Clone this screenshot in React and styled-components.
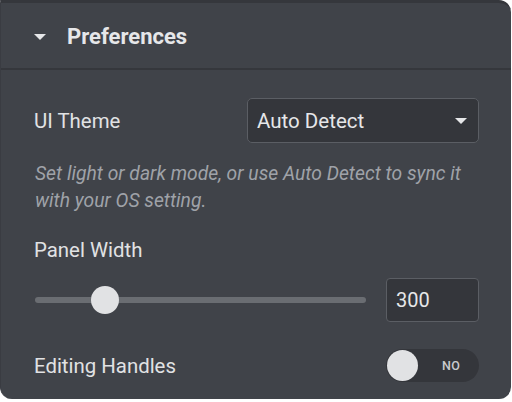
import React from "react";
import styled, { createGlobalStyle } from "styled-components";

const Global = createGlobalStyle`
  html, body { margin: 0; padding: 0; background: #ffffff; }
  body { font-family: Roboto, "Noto Sans", Arial, sans-serif; }
`;

const Panel = styled.div`
  width: 511px;
  height: 399px;
  box-sizing: border-box;
  background: #404349;
  border-top: 3px solid #35373c;
  border-left: 1px solid #3a3c42;
  border-radius: 0 12px 12px 12px;
  color: #e1e2e4;
  overflow: hidden;
`;

const Header = styled.div`
  height: 67px;
  border-bottom: 2px solid #35373c;
  display: flex;
  align-items: center;
  padding-left: 33px;
  gap: 21px;
  font-weight: 700;
  font-size: 22px;
  color: #e6e7e9;
  padding-top: 2px;
  box-sizing: border-box;
`;

const Caret = styled.span`
  width: 0;
  height: 0;
  border-left: 6px solid transparent;
  border-right: 6px solid transparent;
  border-top: 6px solid ${(p) => p.color || "#e6e7e9"};
`;

const Body = styled.div`
  padding: 28px 32px 0 33px;
  display: flex;
  flex-direction: column;
`;

const Row = styled.div`
  display: flex;
  align-items: center;
  justify-content: space-between;
  gap: 20px;
  margin-top: ${(p) => p.mt || 0}px;
`;

const Label = styled.div`
  font-size: 20.4px;
  line-height: 24px;
  color: #e1e2e4;
`;

const Select = styled.div`
  width: 232px;
  height: 45px;
  box-sizing: border-box;
  border: 1px solid #5b5e64;
  border-radius: 5px;
  background: #34363b;
  display: flex;
  align-items: center;
  justify-content: space-between;
  padding: 0 11px 0 9px;
  font-size: 20.5px;
  color: #e6e7e9;
`;

const Help = styled.div`
  margin-top: 17px;
  font-style: italic;
  font-size: 19.3px;
  line-height: 27px;
  color: #9fa2a8;
  padding-left: 1px;
`;

const Track = styled.div`
  position: relative;
  flex: 1;
  height: 6px;
  border-radius: 3px;
  background: #6a6d72;
  margin-left: 1px;
`;

const Thumb = styled.div`
  position: absolute;
  top: 50%;
  width: 28px;
  height: 28px;
  border-radius: 50%;
  background: #e1e2e4;
  transform: translate(-50%, -50%);
`;

const NumberBox = styled.div`
  width: 93px;
  height: 44px;
  box-sizing: border-box;
  border: 1px solid #5b5e64;
  border-radius: 4px;
  background: #34363b;
  display: flex;
  align-items: center;
  padding-left: 9px;
  font-size: 20px;
  color: #e6e7e9;
`;

const Toggle = styled.div`
  position: relative;
  width: 93px;
  height: 33px;
  box-sizing: border-box;
  border-radius: 17px;
  background: #34363b;
  display: flex;
  align-items: center;
  justify-content: flex-end;
  padding-right: 19px;
  font-size: 12.5px;
  font-weight: 500;
  color: #c9cbce;
  letter-spacing: 0.2px;
`;

const Knob = styled.div`
  position: absolute;
  left: 1px;
  top: 1px;
  width: 31px;
  height: 31px;
  border-radius: 50%;
  background: #e1e2e4;
`;

export default function App() {
  const value = 300;
  const pct = 21;
  return (
    <>
      <Global />
      <Panel>
        <Header>
          <Caret />
          <span>Preferences</span>
        </Header>
        <Body>
          <Row>
            <Label>UI Theme</Label>
            <Select>
              <span>Auto Detect</span>
              <Caret />
            </Select>
          </Row>
          <Help>
            Set light or dark mode, or use Auto Detect to sync it
            <br />
            with your OS setting.
          </Help>
          <Row mt={24}>
            <Label>Panel Width</Label>
          </Row>
          <Row mt={16}>
            <Track>
              <Thumb style={{ left: `${pct}%` }} />
            </Track>
            <NumberBox>{value}</NumberBox>
          </Row>
          <Row mt={27}>
            <Label>Editing Handles</Label>
            <Toggle>
              <Knob />
              NO
            </Toggle>
          </Row>
        </Body>
      </Panel>
    </>
  );
}
